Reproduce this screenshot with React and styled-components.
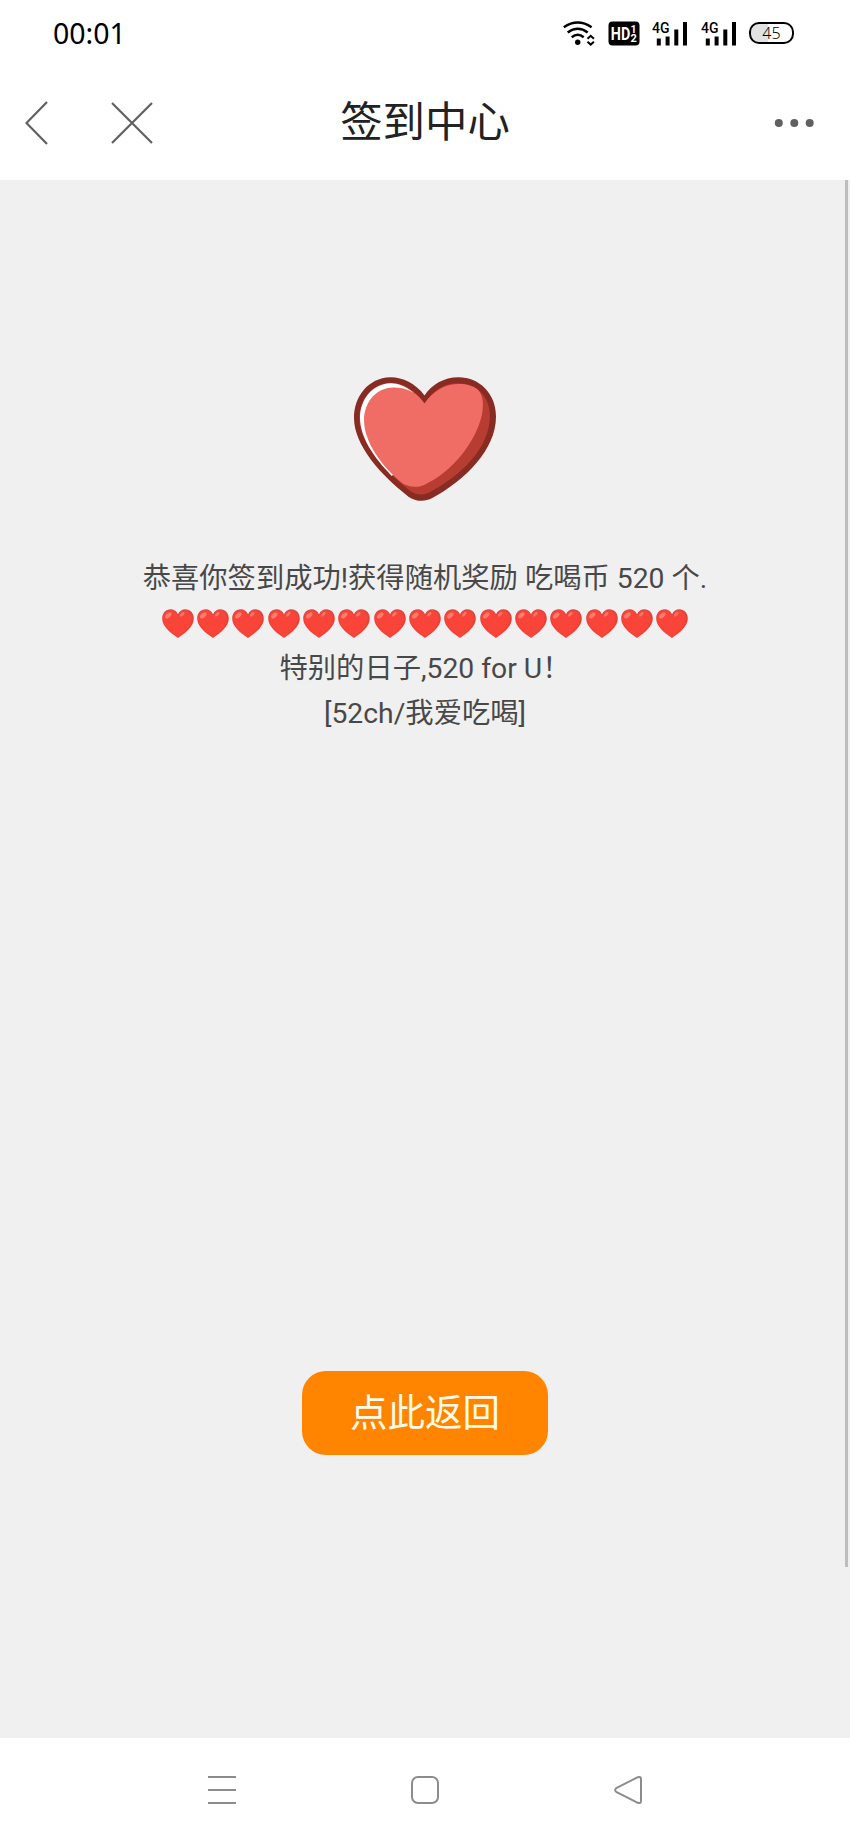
import React from 'react';
import styled, { createGlobalStyle } from 'styled-components';

const HEARTS = 15;

const SignalIcon = () => (
  <svg width="36" height="25" viewBox="0 0 36 25">
    <text x="0" y="11.5" fontFamily="Roboto, sans-serif" fontSize="14" fontWeight="500" textLength="17.5" lengthAdjust="spacingAndGlyphs">4G</text>
    <g stroke="#000" strokeWidth="4" strokeLinecap="butt">
      <path d="M6.8 17.5v7M15.6 15.5v9M24.3 8.5v16M33 1v23.5" />
    </g>
  </svg>
);

const WifiIcon = () => (
  <svg width="32" height="25" viewBox="0 0 32 25">
    <g fill="none" stroke="#000" strokeWidth="2.5">
      <path d="M.8 6.2Q14.7-3 28.6 6.2" />
      <path d="M4.7 11.4Q14.7 4 24.7 11.4" />
      <path d="M8.7 16.2Q14.7 11.4 20.7 16.2" />
      <path d="M24.5 17.7L27.7 14.8L30.9 17.7M24.5 20.7L27.7 23.6L30.9 20.7" strokeWidth="2" />
    </g>
    <circle cx="14.7" cy="21.3" r="2.7" />
  </svg>
);

const HdIcon = () => (
  <svg width="32" height="25" viewBox="0 0 32 25">
    <rect x=".5" y=".5" width="31" height="24" rx="4" />
    <g fill="#fff" fontFamily="Roboto, sans-serif" fontWeight="700">
      <text x="2.8" y="18.5" fontSize="17.5" textLength="19.5" lengthAdjust="spacingAndGlyphs">HD</text>
      <text x="22.5" y="11.5" fontSize="10.5">1</text>
      <text x="22.5" y="20.8" fontSize="11">2</text>
    </g>
  </svg>
);

const BigHeart = () => (
  <svg width="142" height="124" viewBox="42 37 425 371">
    <path fill="#872b23" d="M253 92C225 55 185 37 150 38C85 40 42 95 42 160C42 240 120 330 205 395C225 410 255 411 275 400C375 345 467 255 467 155C467 85 415 38 355 38C310 38 275 60 253 92Z" />
    <path fill="#b73c32" d="M253 116C228 78 190 53 150 54C95 56 58 105 58 162C58 232 130 315 212 379C228 391 250 392 268 382C365 330 447 250 449 155C450 98 410 56 355 56C310 56 280 78 253 116Z" />
    <path fill="#fff" d="M218 82C195 64 172 55 150 56C96 58 60 105 60 160C60 215 100 278 155 333L170 320L230 100Z" />
    <path fill="#f06d66" d="M253 116C232 86 205 68 160 68C105 69 72 115 72 166C72 228 120 300 183 352C200 366 228 370 252 360C335 322 405 235 425 150C430 120 430 95 414 76C398 62 375 57 352 58C308 60 280 80 253 116Z" />
  </svg>
);

const SmallHeart = () => (
  <svg width="32" height="29" viewBox="0 0 32 29">
    <defs>
      <linearGradient id="edge" x1="0" y1="0" x2="0" y2="1">
        <stop offset="0" stopColor="#d34d45" />
        <stop offset=".45" stopColor="#ee3d34" />
        <stop offset="1" stopColor="#f44336" />
      </linearGradient>
    </defs>
    <path fill="url(#edge)" d="M16 5.2C14.5 1.8 11.7.3 8.7.3C3.7.3.2 4.1.2 9.6C.2 17.4 7.8 23.5 16 29C24.2 23.5 31.8 17.4 31.8 9.6C31.8 4.1 28.3.3 23.3.3C20.3.3 17.5 1.8 16 5.2Z" />
    <path fill="#f9443a" d="M16 6.5C14.3 2.8 11.6 1.3 8.9 1.3C4.4 1.3 1.2 4.8 1.2 9.7C1.2 16.7 8 22.2 16 27.5C23 22.5 29.7 16.7 29.7 9.7C29.7 4.8 26.9 1.6 22.9 1.6C20 1.6 17.6 3 16 6.5Z" />
    <ellipse cx="6.3" cy="6.4" rx="3.8" ry="2.2" fill="#ff8a7c" opacity=".8" transform="rotate(-42 6.3 6.4)" />
    <ellipse cx="20.3" cy="5.3" rx="2.8" ry="1.4" fill="#ff8a7c" opacity=".75" transform="rotate(-42 20.3 5.3)" />
  </svg>
);

const App = () => {
  return (
    <Screen>
      <GlobalStyle />
      <StatusBar>
        <Clock>00:01</Clock>
        <StatusIcons>
          <WifiIcon />
          <HdIcon />
          <SignalIcon />
          <SignalIcon />
          <Battery>45</Battery>
        </StatusIcons>
      </StatusBar>
      <Header>
        <HeaderSide>
          <svg width="23" height="44" viewBox="0 0 23 44" fill="none" stroke="#606060" strokeWidth="2.2">
            <path d="M22 1L1.5 22L22 43" />
          </svg>
          <svg width="42" height="42" viewBox="0 0 42 42" fill="none" stroke="#606060" strokeWidth="2.2">
            <path d="M1 1L41 41M41 1L1 41" />
          </svg>
        </HeaderSide>
        <Title>签到中心</Title>
        <HeaderSide $end>
          <svg width="40" height="10" viewBox="0 0 40 10" fill="#606060">
            <circle cx="4.8" cy="5" r="4" />
            <circle cx="20.3" cy="5" r="4" />
            <circle cx="35.7" cy="5" r="4" />
          </svg>
        </HeaderSide>
      </Header>
      <Content>
        <Main>
          <BigHeart />
          <Message>
            <Line>恭喜你签到成功!获得随机奖励 吃喝币 520 个.</Line>
            <HeartRow>
              {Array.from({ length: HEARTS }, (_, i) => <SmallHeart key={i} />)}
            </HeartRow>
            <Line>特别的日子,520 for U！</Line>
            <Line>[52ch/我爱吃喝]</Line>
          </Message>
          <BackButton>点此返回</BackButton>
        </Main>
        <ScrollThumb />
      </Content>
      <NavBar>
        <svg width="30" height="30" viewBox="0 0 30 30" stroke="#8c8c8c" strokeWidth="2">
          <path d="M1 2H29M1 15H29M1 28H29" />
        </svg>
        <svg width="30" height="30" viewBox="0 0 30 30" fill="none" stroke="#8c8c8c" strokeWidth="2">
          <rect x="2" y="2" width="26" height="26" rx="6" />
        </svg>
        <svg width="30" height="30" viewBox="0 0 30 30" fill="none" stroke="#8c8c8c" strokeWidth="2">
          <path d="M3.2 13.2L24.8 2.2Q28 1.2 28 4.2V25.8Q28 28.8 24.8 27.8L3.2 16.8Q1 15 3.2 13.2Z" />
        </svg>
      </NavBar>
    </Screen>
  );
};

const GlobalStyle = createGlobalStyle`
  body {
    margin: 0;
    background: #fff;
  }

  svg {
    display: block;
    flex-shrink: 0;
  }
`;

const Screen = styled.div`
  display: flex;
  flex-direction: column;
  width: 850px;
  height: 1842px;
  overflow: hidden;
  background: #fff;
  font-family: Roboto, 'Noto Sans CJK SC', sans-serif;
`;

const StatusBar = styled.div`
  display: flex;
  align-items: center;
  justify-content: space-between;
  height: 66px;
  padding: 0 56px 0 53px;
  box-sizing: border-box;
`;

const Clock = styled.span`
  font-family: 'Noto Sans', sans-serif;
  font-size: 28.5px;
  line-height: 66px;
  color: #000;
`;

const StatusIcons = styled.div`
  display: flex;
  align-items: center;
  gap: 12.5px;
`;

const Battery = styled.span`
  width: 45px;
  height: 22px;
  box-sizing: border-box;
  border: 2.5px solid #000;
  border-radius: 10px;
  background: linear-gradient(90deg, #e2e2e2 42%, #fff 42%);
  font-family: 'Noto Sans', sans-serif;
  font-weight: 300;
  font-size: 16px;
  line-height: 18px;
  text-align: center;
`;

const Header = styled.header`
  display: grid;
  grid-template-columns: 1fr auto 1fr;
  align-items: center;
  height: 114px;
  padding: 0 36px 0 25px;
  box-sizing: border-box;
`;

const HeaderSide = styled.div`
  display: flex;
  align-items: center;
  justify-content: ${({ $end }) => ($end ? 'flex-end' : 'flex-start')};
  gap: 63px;
`;

const Title = styled.h1`
  margin: 0 0 0 11px;
  font-size: 42.4px;
  font-weight: 400;
  line-height: 60px;
  color: #222;
`;

const Content = styled.div`
  display: flex;
  height: 1558px;
  background: #f0f0f0;
`;

const Main = styled.main`
  display: flex;
  flex: 1;
  flex-direction: column;
  align-items: center;
  padding: 197px 0 0 5px;
`;

const Message = styled.div`
  display: flex;
  flex-direction: column;
  align-items: center;
  margin-top: 55px;
  color: #484848;
`;

const Line = styled.p`
  margin: 0;
  font-size: 28.3px;
  line-height: 45px;
  white-space: nowrap;
`;

const HeartRow = styled.div`
  display: flex;
  align-items: center;
  gap: 3.35px;
  height: 45px;
`;

const BackButton = styled.button`
  width: 246px;
  height: 84px;
  margin-top: 635px;
  padding: 0;
  border: none;
  border-radius: 24px;
  background: #ff8400;
  color: #fffbe8;
  font-family: inherit;
  font-size: 37.5px;
  line-height: 84px;
`;

const ScrollThumb = styled.div`
  width: 3px;
  height: 1387px;
  margin-right: 2px;
  background: #bdbdbd;
`;

const NavBar = styled.nav`
  display: flex;
  justify-content: space-between;
  align-items: center;
  height: 104px;
  padding: 0 207px;
`;

export default App;
